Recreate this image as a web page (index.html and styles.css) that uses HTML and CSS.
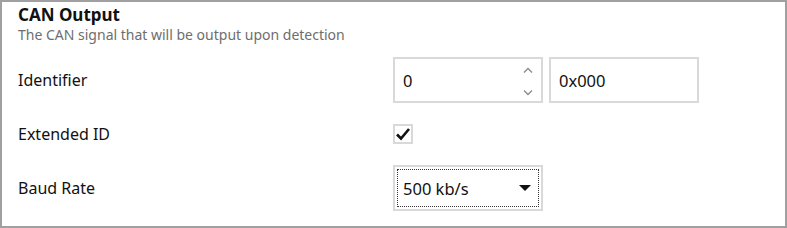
FILE: index.html
```html
<!DOCTYPE html>
<html lang="en">
<head>
    <meta charset="UTF-8">
    <title>CAN Output</title>
    <link rel="stylesheet" href="styles.css">
</head>
<body>
    <div class="panel">
        <h1 class="title">CAN Output</h1>
        <p class="subtitle">The CAN signal that will be output upon detection</p>
        <div class="form">
            <div class="row">
                <label class="label">Identifier</label>
                <div class="fields">
                    <div class="box spin">
                        <span>0</span>
                        <div class="arrows">
                            <svg width="10" height="6" viewBox="0 0 10 6"><path d="M1 5.5 L5 1.5 L9 5.5" fill="none" stroke="#8a8a8a" stroke-width="1.3"/></svg>
                            <svg width="10" height="6" viewBox="0 0 10 6"><path d="M1 0.5 L5 4.5 L9 0.5" fill="none" stroke="#8a8a8a" stroke-width="1.3"/></svg>
                        </div>
                    </div>
                    <div class="box">0x000</div>
                </div>
            </div>
            <div class="row row-check">
                <label class="label">Extended ID</label>
                <div class="fields">
                    <div class="checkbox">
                        <svg width="16" height="14" viewBox="0 0 16 14"><path d="M2 7.5 L6 11.5 L14 2" fill="none" stroke="#111" stroke-width="2.6"/></svg>
                    </div>
                </div>
            </div>
            <div class="row">
                <label class="label">Baud Rate</label>
                <div class="fields">
                    <div class="box combo">
                        <div class="focus">
                            <span>500 kb/s</span>
                            <span class="caret"></span>
                        </div>
                    </div>
                </div>
            </div>
        </div>
    </div>
</body>
</html>
```

FILE: styles.css
```css
body {
    margin: 0;
    font-family: "Noto Sans", "Open Sans", sans-serif;
    color: #111;
    background: #fff;
}
.panel {
    width: 787px;
    height: 228px;
    box-sizing: border-box;
    border: 2px solid #a0a0a0;
    padding: 0 0 0 16px;
}
.title {
    margin: 2px 0 0;
    font-size: 17px;
    font-weight: bold;
    line-height: 22px;
}
.subtitle {
    margin: 0;
    font-size: 14px;
    line-height: 18px;
    color: #6e6e6e;
}
.form {
    margin-top: 13px;
}
.row {
    display: flex;
    align-items: center;
    height: 46px;
}
.row-check {
    height: 62px;
}
.label {
    width: 375px;
    font-size: 16px;
}
.fields {
    display: flex;
    gap: 6px;
}
.box {
    width: 150px;
    height: 46px;
    box-sizing: border-box;
    border: 2px solid #d9d9d9;
    font-size: 16.5px;
    display: flex;
    align-items: center;
    padding: 0 8px;
}
.spin {
    justify-content: space-between;
    padding-right: 8px;
}
.arrows {
    display: flex;
    flex-direction: column;
    gap: 17px;
    margin-top: 2px;
}
.checkbox {
    width: 20px;
    height: 20px;
    box-sizing: border-box;
    border: 2px solid #d9d9d9;
    display: flex;
    align-items: center;
    justify-content: center;
}
.combo {
    padding: 2px;
}
.focus {
    flex: 1;
    height: 100%;
    box-sizing: border-box;
    border: 1px dotted #333;
    display: flex;
    align-items: center;
    justify-content: space-between;
    padding: 0 7px 0 5px;
}
.caret {
    width: 0;
    height: 0;
    border-left: 6px solid transparent;
    border-right: 6px solid transparent;
    border-top: 6px solid #111;
}
```
